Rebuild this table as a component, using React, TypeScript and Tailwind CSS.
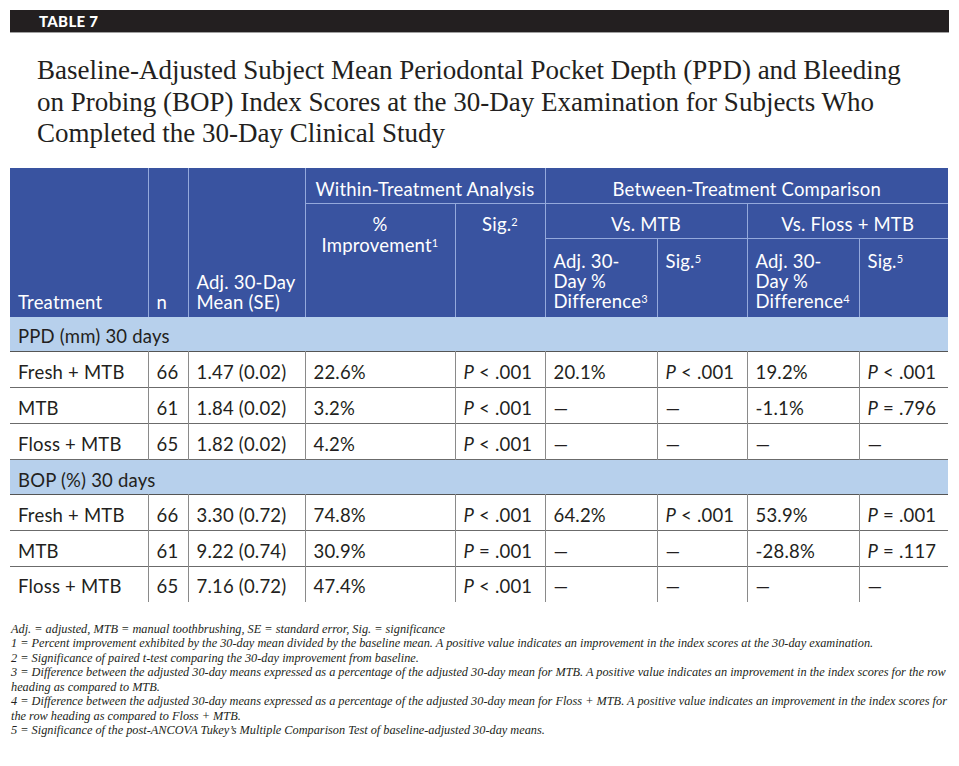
import React from "react";

const sans = { fontFamily: "Lato, 'Noto Sans', sans-serif" };
const serif = { fontFamily: "'Liberation Serif', 'DejaVu Serif', serif" };

const P = ({ op, v }: { op: string; v: string }) => (
  <span>
    <i>P</i> {op} {v}
  </span>
);

const D = () => <span>—</span>;

type Row = [string, string, string, string, React.ReactNode, React.ReactNode, React.ReactNode, React.ReactNode, React.ReactNode];

const ppd: Row[] = [
  ["Fresh + MTB", "66", "1.47 (0.02)", "22.6%", <P op="<" v=".001" />, "20.1%", <P op="<" v=".001" />, "19.2%", <P op="<" v=".001" />],
  ["MTB", "61", "1.84 (0.02)", "3.2%", <P op="<" v=".001" />, <D />, <D />, "-1.1%", <P op="=" v=".796" />],
  ["Floss + MTB", "65", "1.82 (0.02)", "4.2%", <P op="<" v=".001" />, <D />, <D />, <D />, <D />],
];
const bop: Row[] = [
  ["Fresh + MTB", "66", "3.30 (0.72)", "74.8%", <P op="<" v=".001" />, "64.2%", <P op="<" v=".001" />, "53.9%", <P op="=" v=".001" />],
  ["MTB", "61", "9.22 (0.74)", "30.9%", <P op="=" v=".001" />, <D />, <D />, "-28.8%", <P op="=" v=".117" />],
  ["Floss + MTB", "65", "7.16 (0.72)", "47.4%", <P op="<" v=".001" />, <D />, <D />, <D />, <D />],
];

function Body({ rows, last }: { rows: Row[]; last: boolean }) {
  return (
    <>
      {rows.map((r, i) => {
        const isLast = last && i === rows.length - 1;
        return (
          <tr key={i} className={isLast ? "h-[35px]" : "h-[36px] border-b border-[#6b6b6b]"}>
            {r.map((c, j) => (
              <td
                key={j}
                className={`px-[8px] pt-[4px] align-middle whitespace-nowrap ${j < 8 ? "border-r border-[#8a8a8a]" : ""}`}
              >
                {c}
              </td>
            ))}
          </tr>
        );
      })}
    </>
  );
}

function Section({ label }: { label: string }) {
  return (
    <tr className="h-[35px] bg-[#b7d0ec] border-b border-[#555]">
      <td colSpan={9} className="px-[8px] pt-[5px] align-middle">
        {label}
      </td>
    </tr>
  );
}

const hb = "border-[#94a9dc]";
const sup = "text-[11px]";

export default function App() {
  return (
    <div className="w-[959px] h-[766px] bg-white text-[#231f20] overflow-hidden">
      <div className="pt-[10px] px-[10px]">
        <div
          className="h-[23px] bg-[#231f20] border-b border-[#a0a0a0] flex items-center pl-[29px] text-white text-[15px] font-black tracking-[0.3px]"
          style={sans}
        >
          TABLE 7
        </div>
      </div>

      <div className="pl-[37px] pr-[10px] mt-[22px] text-[27px] leading-[31.5px] whitespace-nowrap" style={serif}>
        Baseline-Adjusted Subject Mean Periodontal Pocket Depth (PPD) and Bleeding
        <br />
        on Probing (BOP) Index Scores at the 30-Day Examination for Subjects Who
        <br />
        Completed the 30-Day Clinical Study
      </div>

      <div className="px-[10px] mt-[18px]" style={sans}>
        <table className="w-[938px] table-fixed border-collapse text-[18.5px] leading-[20px] tracking-[0.2px]">
          <colgroup>
            <col className="w-[138px]" />
            <col className="w-[40px]" />
            <col className="w-[117px]" />
            <col className="w-[150px]" />
            <col className="w-[90px]" />
            <col className="w-[112px]" />
            <col className="w-[90px]" />
            <col className="w-[112px]" />
            <col className="w-[89px]" />
          </colgroup>
          <thead className="bg-[#3953a0] text-white">
            <tr className="h-[36px]">
              <th rowSpan={3} className={`font-normal text-left align-bottom px-[8px] pb-[5px] border-r ${hb}`}>
                Treatment
              </th>
              <th rowSpan={3} className={`font-normal text-left align-bottom px-[8px] pb-[5px] border-r ${hb}`}>
                n
              </th>
              <th rowSpan={3} className={`font-normal text-left align-bottom px-[8px] pb-[5px] border-r ${hb} whitespace-nowrap`}>
                Adj. 30-Day
                <br />
                Mean (SE)
              </th>
              <th colSpan={2} className={`font-normal text-center align-top pt-[11px] border-r border-b ${hb} whitespace-nowrap`}>
                Within-Treatment Analysis
              </th>
              <th colSpan={4} className={`font-normal text-center align-top pt-[11px] border-b ${hb}`}>
                Between-Treatment Comparison
              </th>
            </tr>
            <tr className="h-[35px]">
              <th rowSpan={2} className={`font-normal text-center align-top pt-[10px] leading-[21px] border-r ${hb}`}>
                %
                <br />
                Improvement<sup className={sup}>1</sup>
              </th>
              <th rowSpan={2} className={`font-normal text-center align-top pt-[10px] border-r ${hb}`}>
                Sig.<sup className={sup}>2</sup>
              </th>
              <th colSpan={2} className={`font-normal text-center align-top pt-[10px] border-r border-b ${hb}`}>
                Vs. MTB
              </th>
              <th colSpan={2} className={`font-normal text-center align-top pt-[10px] border-b ${hb}`}>
                Vs. Floss + MTB
              </th>
            </tr>
            <tr className="h-[78px]">
              <th className={`font-normal text-left align-top pt-[12px] px-[8px] border-r ${hb} whitespace-nowrap`}>
                Adj. 30-
                <br />
                Day %
                <br />
                Difference<sup className={sup}>3</sup>
              </th>
              <th className={`font-normal text-left align-top pt-[12px] px-[8px] border-r ${hb}`}>
                Sig.<sup className={sup}>5</sup>
              </th>
              <th className={`font-normal text-left align-top pt-[12px] px-[8px] border-r ${hb} whitespace-nowrap`}>
                Adj. 30-
                <br />
                Day %
                <br />
                Difference<sup className={sup}>4</sup>
              </th>
              <th className="font-normal text-left align-top pt-[12px] px-[8px]">
                Sig.<sup className={sup}>5</sup>
              </th>
            </tr>
          </thead>
          <tbody className="text-[#231f20]">
            <Section label="PPD (mm) 30 days" />
            <Body rows={ppd} last={false} />
            <Section label="BOP (%) 30 days" />
            <Body rows={bop} last={true} />
          </tbody>
        </table>
      </div>

      <div className="px-[11px] mt-[20px] italic text-[12.3px] leading-[14.5px] whitespace-nowrap" style={serif}>
        <p>Adj. = adjusted, MTB = manual toothbrushing, SE = standard error, Sig. = significance</p>
        <p>
          1 = Percent improvement exhibited by the 30-day mean divided by the baseline mean. A positive value indicates an
          improvement in the index scores at the 30-day examination.
        </p>
        <p>2 = Significance of paired t-test comparing the 30-day improvement from baseline.</p>
        <p>
          3 = Difference between the adjusted 30-day means expressed as a percentage of the adjusted 30-day mean for MTB. A
          positive value indicates an improvement in the index scores for the row
          <br />
          heading as compared to MTB.
        </p>
        <p>
          4 = Difference between the adjusted 30-day means expressed as a percentage of the adjusted 30-day mean for Floss +
          MTB. A positive value indicates an improvement in the index scores for
          <br />
          the row heading as compared to Floss + MTB.
        </p>
        <p>5 = Significance of the post-ANCOVA Tukey’s Multiple Comparison Test of baseline-adjusted 30-day means.</p>
      </div>
    </div>
  );
}
